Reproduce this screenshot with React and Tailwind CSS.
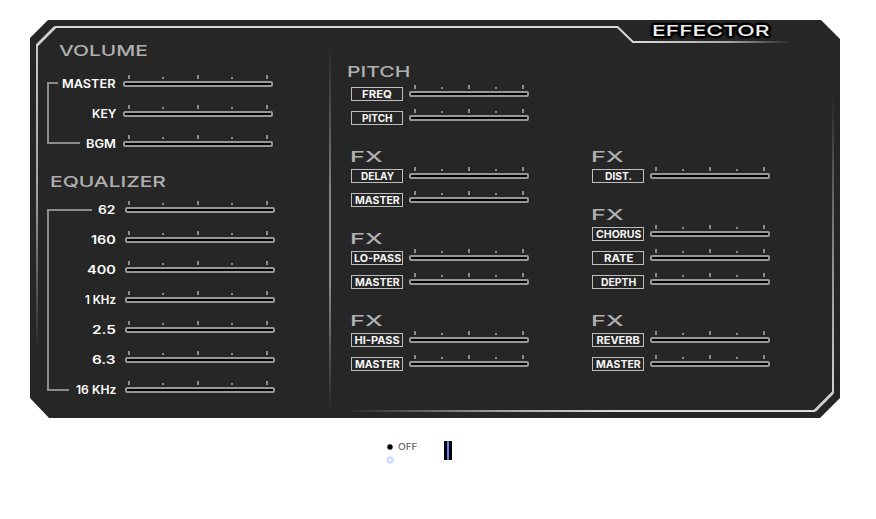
import { useLayoutEffect, useRef, useState } from "react";

// Text stretched horizontally so that it fills exactly `width` pixels.
function FitText({ width, children, className = "" }) {
  const ref = useRef(null);
  const [scale, setScale] = useState(1);
  useLayoutEffect(() => {
    setScale(width / ref.current.offsetWidth);
  }, [width, children]);
  return (
    <span className="flex shrink-0 items-start whitespace-nowrap" style={{ width }}>
      <span
        ref={ref}
        className={`block shrink-0 origin-left ${className}`}
        style={{ transform: `scaleX(${scale})` }}
      >
        {children}
      </span>
    </span>
  );
}

function Heading({ width, children }) {
  return (
    <FitText width={width} className="text-[15px] font-medium leading-5 text-[#b0b0b0]">
      {children}
    </FitText>
  );
}

const TICKS = {
  volume: "pl-[5px] grid-cols-[34px_35px_34px_35px_2px]",
  equalizer: "pl-[3px] grid-cols-[34px_35px_34px_35px_2px]",
  fx: "pl-[5px] grid-cols-[27px_27px_27px_27px_2px]",
};

function Slider({ kind }) {
  return (
    <div className={kind === "fx" ? "w-[120px]" : "w-[150px]"}>
      <div className={`mb-0.5 grid h-1 items-end ${TICKS[kind]}`}>
        {[4, 2, 4, 2, 4].map((h, i) => (
          <i key={i} className={`block w-0.5 bg-[#8c8c8c] ${h === 4 ? "h-1" : "h-0.5"}`} />
        ))}
      </div>
      <div className="h-1.5 rounded-[2px] border-2 border-[#969696] bg-black" />
    </div>
  );
}

function LevelRow({ label, width, kind }) {
  const volume = kind === "volume";
  return (
    <div className={`flex h-[30px] items-start ${volume ? "gap-[7px]" : "gap-[9px]"}`}>
      <div className="flex w-[69px] justify-end">
        <FitText
          width={width}
          className={`font-semibold text-white ${volume ? "text-[12px] leading-[17px]" : "text-[11.5px] leading-[18px]"}`}
        >
          {label}
        </FitText>
      </div>
      <Slider kind={kind} />
    </div>
  );
}

function FxRow({ label, width }) {
  return (
    <div className="flex h-6 items-start gap-1.5">
      <div className="mt-0.5 flex h-3.5 w-[52px] justify-center border border-[#bebebe]">
        <FitText width={width} className="text-[11px] font-bold leading-[12px] text-[#f5f5f5]">
          {label}
        </FitText>
      </div>
      <Slider kind="fx" />
    </div>
  );
}

function FxGroup({ rows, className = "" }) {
  return (
    <div className={className}>
      <div className="-ml-px">
        <Heading width={32}>FX</Heading>
      </div>
      {rows.map(([label, width]) => (
        <FxRow key={label} label={label} width={width} />
      ))}
    </div>
  );
}

function Frame() {
  return (
    <svg className="absolute inset-0" width="810" height="398" viewBox="30 20 810 398" fill="none">
      <defs>
        <linearGradient id="leftFade" gradientUnits="userSpaceOnUse" x1="0" y1="44" x2="0" y2="352">
          <stop offset="0" stopColor="#c8c8c8" />
          <stop offset="0.5" stopColor="#a0a0a0" />
          <stop offset="1" stopColor="#262626" />
        </linearGradient>
        <linearGradient id="topFade" gradientUnits="userSpaceOnUse" x1="633" y1="0" x2="792" y2="0">
          <stop offset="0" stopColor="#dcdcdc" />
          <stop offset="0.6" stopColor="#a8a8a8" />
          <stop offset="1" stopColor="#262626" />
        </linearGradient>
        <linearGradient id="bottomFade" gradientUnits="userSpaceOnUse" x1="345" y1="0" x2="620" y2="0">
          <stop offset="0" stopColor="#262626" />
          <stop offset="0.6" stopColor="#a8a8a8" />
          <stop offset="1" stopColor="#dcdcdc" />
        </linearGradient>
        <linearGradient id="rightFade" gradientUnits="userSpaceOnUse" x1="0" y1="95" x2="0" y2="393">
          <stop offset="0" stopColor="#262626" />
          <stop offset="0.55" stopColor="#8c8c8c" />
          <stop offset="1" stopColor="#d2d2d2" />
        </linearGradient>
        <linearGradient id="divider" gradientUnits="userSpaceOnUse" x1="0" y1="45" x2="0" y2="410">
          <stop offset="0" stopColor="#262626" />
          <stop offset="0.45" stopColor="#8c8c8c" />
          <stop offset="0.65" stopColor="#8c8c8c" />
          <stop offset="1" stopColor="#262626" />
        </linearGradient>
      </defs>
      <path d="M48 20H821L840 39V398L820 418H49L30 398V38Z" fill="#262626" />
      <rect x="36" y="44" width="2" height="308" fill="url(#leftFade)" />
      <path d="M54.5 27H617.5L633 42H635" stroke="#d8d8d8" strokeWidth="2" />
      <path d="M37.2 45L55 27.2" stroke="#d0d0d0" strokeWidth="2.8" />
      <rect x="634" y="41" width="158" height="2" fill="url(#topFade)" />
      <rect x="345" y="410" width="470" height="2" fill="url(#bottomFade)" />
      <path d="M814.8 410.8L832.8 392.8" stroke="#d0d0d0" strokeWidth="2.8" />
      <rect x="832" y="95" width="2" height="298" fill="url(#rightFade)" />
      <rect x="329" y="45" width="2" height="365" fill="url(#divider)" />
      <path d="M58 83H48V143H80M92 210H48V390H69" stroke="#8c8c8c" strokeWidth="2" />
    </svg>
  );
}

const OUTLINE =
  "[text-shadow:-2px_0_1px_#000,2px_0_1px_#000,0_-2px_1px_#000,0_2px_1px_#000,-1px_-2px_1px_#000,1px_2px_1px_#000,-1px_2px_1px_#000,1px_-2px_1px_#000]";

export default function App() {
  return (
    <div className="h-[519px] w-[876px] overflow-hidden bg-white pl-[30px] pt-5 font-['Inter','Liberation_Sans',sans-serif]">
      <main className="relative h-[398px] w-[810px]">
        <Frame />
        <div className="relative flex h-full">
          <section className="w-[318px] pl-[17px] pt-[21px]">
            <div className="mb-3.5 ml-3">
              <Heading width={89}>VOLUME</Heading>
            </div>
            <LevelRow kind="volume" label="MASTER" width={54} />
            <LevelRow kind="volume" label="KEY" width={24} />
            <LevelRow kind="volume" label="BGM" width={30} />
            <div className="mb-[9px] ml-[3px] mt-[7px]">
              <Heading width={116}>EQUALIZER</Heading>
            </div>
            <LevelRow kind="equalizer" label="62" width={18} />
            <LevelRow kind="equalizer" label="160" width={25} />
            <LevelRow kind="equalizer" label="400" width={29} />
            <LevelRow kind="equalizer" label="1 KHz" width={31} />
            <LevelRow kind="equalizer" label="2.5" width={24} />
            <LevelRow kind="equalizer" label="6.3" width={24} />
            <LevelRow kind="equalizer" label="16 KHz" width={40} />
          </section>

          <section className="w-[241px] pl-[3px] pt-[42px]">
            <div className="-ml-1 mb-[3px]">
              <Heading width={63}>PITCH</Heading>
            </div>
            <FxRow label="FREQ" width={30} />
            <FxRow label="PITCH" width={31} />
            <FxGroup className="mt-[14px]" rows={[["DELAY", 33], ["MASTER", 45]]} />
            <FxGroup className="mt-[14px]" rows={[["LO-PASS", 47], ["MASTER", 45]]} />
            <FxGroup className="mt-[14px]" rows={[["HI-PASS", 45], ["MASTER", 45]]} />
          </section>

          <section className="w-[251px] pl-[3px]">
            <div className="flex h-[43px] items-start pl-[60px]">
              <FitText width={117} className={`text-[15px] font-medium leading-[21px] text-[#eee] ${OUTLINE}`}>
                EFFECTOR
              </FitText>
            </div>
            <FxGroup className="mt-[84px]" rows={[["DIST.", 27]]} />
            <FxGroup className="mt-[14px]" rows={[["CHORUS", 45], ["RATE", 29], ["DEPTH", 35]]} />
            <FxGroup className="mt-[14px]" rows={[["REVERB", 43], ["MASTER", 45]]} />
          </section>
        </div>
      </main>

      <footer className="flex items-start pl-[356px] pt-[23px]">
        <svg width="8" height="24" viewBox="386 441 8 24" fill="none">
          <circle cx="390" cy="447" r="2.7" fill="#000" />
          <circle cx="390" cy="460" r="3" stroke="#dfe6ff" strokeWidth="2" />
          <circle cx="390" cy="460" r="2.2" stroke="#b4c6ff" />
        </svg>
        <div className="ml-1 w-[46px]">
          <FitText width={20} className="text-[8.5px] font-medium leading-[12px] text-[#666]">
            OFF
          </FitText>
        </div>
        <div className="flex h-[19px] w-2 justify-center bg-black">
          <div className="w-0.5 bg-[#5a82f5]" />
        </div>
      </footer>
    </div>
  );
}
